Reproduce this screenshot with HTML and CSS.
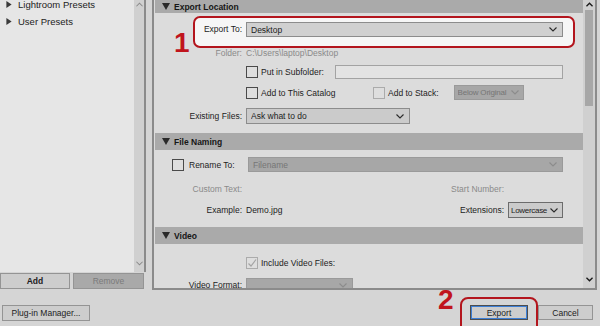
FILE: index.html
```html
<!DOCTYPE html>
<html lang="en">

<head>
    <meta charset="UTF-8">
    <meta name="viewport" content="width=device-width, initial-scale=1.0">
    <title>Export</title>
    <link rel="stylesheet" href="styles.css">
</head>

<body>
    <div class="dialog">
        <div class="main">
            <div class="left">
                <div class="presets">
                    <ul class="tree">
                        <li><svg class="tri-r" viewBox="0 0 6 8"><path d="M0 0l6 4-6 4z"/></svg>Lightroom Presets</li>
                        <li><svg class="tri-r" viewBox="0 0 6 8"><path d="M0 0l6 4-6 4z"/></svg>User Presets</li>
                    </ul>
                    <div class="bar light">
                        <svg class="arr" viewBox="0 0 8 5"><path d="M.5 4.5 4 1l3.5 3.5"/></svg>
                        <svg class="arr end" viewBox="0 0 8 5"><path d="M.5.5 4 4 7.5.5"/></svg>
                    </div>
                </div>
                <div class="pbtns">
                    <button class="btn add">Add</button>
                    <button class="btn off rem">Remove</button>
                </div>
            </div>

            <div class="right">
                <div class="content">
                    <div class="head top"><svg class="tri" viewBox="0 0 8 7"><path d="M0 0h8L4 7z"/></svg>Export Location</div>

                    <div class="row mark">
                        <span class="num one">1</span>
                        <label class="lbl">Export To:</label>
                        <div class="sel desk"><span class="val">Desktop</span><svg class="chev" viewBox="0 0 8 5"><path d="M.5.5 4 4 7.5.5"/></svg></div>
                    </div>

                    <div class="row folder">
                        <span class="lbl dim">Folder:</span>
                        <span class="dim">C:\Users\laptop\Desktop</span>
                    </div>

                    <div class="row h15 m6">
                        <span class="lbl"></span>
                        <span class="cb"></span>Put in Subfolder:
                        <span class="field"></span>
                    </div>

                    <div class="row h15 m6">
                        <span class="lbl"></span>
                        <span class="opt"><span class="cb"></span>Add to This Catalog</span>
                        <span class="cb faint"></span>Add to Stack:
                        <div class="sel off stack"><span class="val">Below Original</span><svg class="chev" viewBox="0 0 8 5"><path d="M.5.5 4 4 7.5.5"/></svg></div>
                    </div>

                    <div class="row h16 m8">
                        <span class="lbl">Existing Files:</span>
                        <div class="sel ask"><span class="val">Ask what to do</span><svg class="chev" viewBox="0 0 8 5"><path d="M.5.5 4 4 7.5.5"/></svg></div>
                    </div>

                    <div class="head m9"><svg class="tri" viewBox="0 0 8 7"><path d="M0 0h8L4 7z"/></svg>File Naming</div>

                    <div class="row h15 m7 rename">
                        <span class="cb"></span>
                        <span class="rlbl">Rename To:</span>
                        <div class="sel off fname"><span class="val">Filename</span><svg class="chev" viewBox="0 0 8 5"><path d="M.5.5 4 4 7.5.5"/></svg></div>
                    </div>

                    <div class="row h15 m9">
                        <span class="lbl dim">Custom Text:</span>
                        <span class="rlbl2 dim">Start Number:</span>
                        <span class="pad"></span>
                    </div>

                    <div class="row h16 m6">
                        <span class="lbl">Example:</span>
                        <span>Demo.jpg</span>
                        <span class="rlbl2">Extensions:</span>
                        <div class="sel ext"><span class="val">Lowercase</span><svg class="chev" viewBox="0 0 8 5"><path d="M.5.5 4 4 7.5.5"/></svg></div>
                    </div>

                    <div class="head m9"><svg class="tri" viewBox="0 0 8 7"><path d="M0 0h8L4 7z"/></svg>Video</div>

                    <div class="row h15 m11">
                        <span class="lbl"></span>
                        <span class="cb faint"><svg class="tick" viewBox="0 0 10 10"><path d="M1.5 5.5 4 8l5-6.5"/></svg></span>Include Video Files:
                    </div>

                    <div class="row h15 m8">
                        <span class="lbl vlbl">Video Format:</span>
                        <div class="sel off vfmt"><span class="val"></span><svg class="chev" viewBox="0 0 8 5"><path d="M.5.5 4 4 7.5.5"/></svg></div>
                    </div>
                </div>
                <div class="bar">
                    <svg class="arr dark" viewBox="0 0 8 5"><path d="M.5 4.5 4 1l3.5 3.5"/></svg>
                    <div class="thumb"></div>
                    <svg class="arr dark end" viewBox="0 0 8 5"><path d="M.5.5 4 4 7.5.5"/></svg>
                </div>
            </div>
        </div>

        <div class="foot">
            <button class="btn plug">Plug-in Manager...</button>
            <div class="mark2">
                <span class="num two">2</span>
                <button class="btn export">Export</button>
            </div>
            <button class="btn cancel">Cancel</button>
        </div>
    </div>
</body>

</html>
```

FILE: styles.css
```css
* {
    box-sizing: border-box;
}

html,
body {
    margin: 0;
    height: 100%;
}

body {
    background-color: #d5d5d5;
    font-family: "Liberation Sans", Arial, sans-serif;
    font-size: 8.5px;
    color: #1c1c1c;
    overflow: hidden;
}

.dialog {
    width: 600px;
    height: 326px;
    display: flex;
    flex-direction: column;
}

.main {
    display: flex;
    gap: 6px;
    height: 290px;
}

/* left presets panel */
.left {
    width: 146px;
    display: flex;
    flex-direction: column;
    gap: 1px;
}

.presets {
    height: 272px;
    display: flex;
    border-right: 2px solid #8b8b8b;
}

.tree {
    flex: 1;
    margin: 0;
    padding: 0;
    list-style: none;
    background-color: #e6e6e6;
}

.tree li {
    display: flex;
    align-items: center;
    gap: 6px;
    height: 17px;
    padding-left: 6px;
    font-size: 9.5px;
    color: #222;
}

.tree li:first-child {
    margin-top: -4px;
}

.tri-r {
    width: 6px;
    height: 7px;
    fill: #3a3a3a;
}

.bar {
    width: 12px;
    background-color: #d0d0d0;
    display: flex;
    flex-direction: column;
    align-items: center;
    padding: 2px 0 6px;
}

.bar.light {
    width: 10px;
}

.arr {
    width: 7px;
    height: 5px;
    fill: none;
    stroke: #8a8a8a;
    stroke-width: 1.2;
}

.arr.dark {
    stroke: #1a1a1a;
    stroke-width: 1.6;
}

.arr.end {
    margin-top: auto;
}

.thumb {
    width: 8px;
    height: 96px;
    margin-top: 3px;
    background-color: #a7a7a7;
}

.pbtns {
    display: flex;
    gap: 3px;
    height: 16px;
}

.btn {
    font: inherit;
    color: #1c1c1c;
    background-color: #cdcdcd;
    border: 1px solid #949494;
    padding: 0;
    height: 16px;
}

.btn.off {
    background-color: #a9a9a9;
    color: #7b7b7b;
}

.add {
    width: 70px;
    font-weight: bold;
}

.rem {
    width: 71px;
}

/* right export settings panel */
.right {
    width: 445px;
    display: flex;
    border: 2px solid #8b8b8b;
    border-top: 0;
    padding-left: 1px;
    background-color: #dcdcdc;
    overflow: hidden;
}

.content {
    flex: 1;
    overflow: hidden;
}

.head {
    display: flex;
    align-items: center;
    gap: 4px;
    height: 17px;
    padding-left: 7px;
    background-color: #aaaaaa;
    font-weight: bold;
    color: #161616;
}

.head.top {
    height: 13px;
}

.tri {
    width: 8px;
    height: 7px;
    fill: #2a2a2a;
}

.row {
    display: flex;
    align-items: center;
    padding-right: 20px;
    white-space: nowrap;
}

.h15 {
    height: 15px;
}

.h16 {
    height: 16px;
}

.m6 {
    margin-top: 6px;
}

.m7 {
    margin-top: 7px;
}

.m8 {
    margin-top: 8px;
}

.m9 {
    margin-top: 9px;
}

.m11 {
    margin-top: 11px;
}

.lbl {
    width: 87px;
    flex: none;
    margin-right: 4px;
    text-align: right;
}

.vlbl {
    align-self: flex-start;
    line-height: 15px;
}

.dim {
    color: #8a8a8a;
}

.mark {
    position: relative;
    height: 32px;
    margin: 3px 8px 0 38px;
    padding: 4px 10px 0 0;
    align-items: flex-start;
    border: 2px solid #b3151d;
    border-radius: 7px;
    background-color: #f6f6f6;
}

.mark .lbl {
    width: 47px;
    line-height: 15px;
}

.num {
    position: absolute;
    font-family: "Liberation Sans", Arial, sans-serif;
    font-weight: bold;
    font-size: 28px;
    line-height: 1;
    color: #c0141c;
}

.one {
    left: -21px;
    top: 11px;
}

.two {
    left: -24px;
    top: -13px;
}

.sel {
    display: flex;
    align-items: center;
    gap: 3px;
    height: 100%;
    padding: 0 5px 0 4px;
    background-color: #cbcbcb;
    border: 1px solid #8c8c8c;
}

.val {
    flex: 1;
    min-width: 0;
    overflow: hidden;
}

.sel.off {
    background-color: #a7a7a7;
    border-color: #9a9a9a;
    color: #767676;
}

.chev {
    width: 8px;
    height: 5px;
    flex: none;
    fill: none;
    stroke: #2a2a2a;
    stroke-width: 1.1;
}

.sel.off .chev {
    stroke: #8c8c8c;
}

.desk {
    flex: 1;
    height: 15px;
    background-color: #d0d0d0;
}

.folder {
    height: 10px;
}

.cb {
    width: 12px;
    height: 12px;
    flex: none;
    margin-right: 3px;
    border: 1px solid #4a4a4a;
    background-color: #dedede;
    display: flex;
    align-items: center;
    justify-content: center;
}

.cb.faint {
    border-color: #ababab;
}

.tick {
    width: 10px;
    height: 10px;
    fill: none;
    stroke: #a4a4a4;
    stroke-width: 1.2;
}

.field {
    margin-left: auto;
    width: 228px;
    height: 14px;
    background-color: #e3e3e3;
    border: 1px solid #a3a3a3;
}

.opt {
    display: flex;
    align-items: center;
    width: 127px;
}

.stack {
    width: 70px;
    margin-left: 15px;
    padding: 0 4px 0 3px;
    gap: 2px;
    font-size: 8px;
    letter-spacing: -0.2px;
}

.ask {
    width: 164px;
}

.rename {
    padding-left: 17px;
}

.rlbl {
    width: 61px;
    flex: none;
    padding-left: 2px;
}

.fname {
    width: 316px;
}

.rlbl2 {
    margin-left: auto;
    margin-right: 4px;
}

.pad {
    width: 55px;
}

.ext {
    width: 55px;
    padding: 0 4px 0 2px;
    gap: 2px;
    font-size: 8px;
    letter-spacing: -0.3px;
    border-color: #6c6c6c;
}

.vfmt {
    width: 107px;
}

/* bottom buttons */
.foot {
    flex: 1;
    display: flex;
    align-items: flex-start;
    padding: 0 7px 0 2px;
}

.plug {
    width: 88px;
    margin-top: 15px;
}

.mark2 {
    position: relative;
    margin-left: auto;
    margin-top: 7px;
    height: 40px;
    padding: 6px 8px 0;
    border: 2px solid #b3151d;
    border-radius: 8px;
}

.export {
    width: 58px;
    height: 15px;
    border-color: #4d4d4d;
    box-shadow: inset 0 0 0 1px #3d7fd6;
}

.cancel {
    width: 55px;
    height: 15px;
    margin-top: 15px;
}
```
